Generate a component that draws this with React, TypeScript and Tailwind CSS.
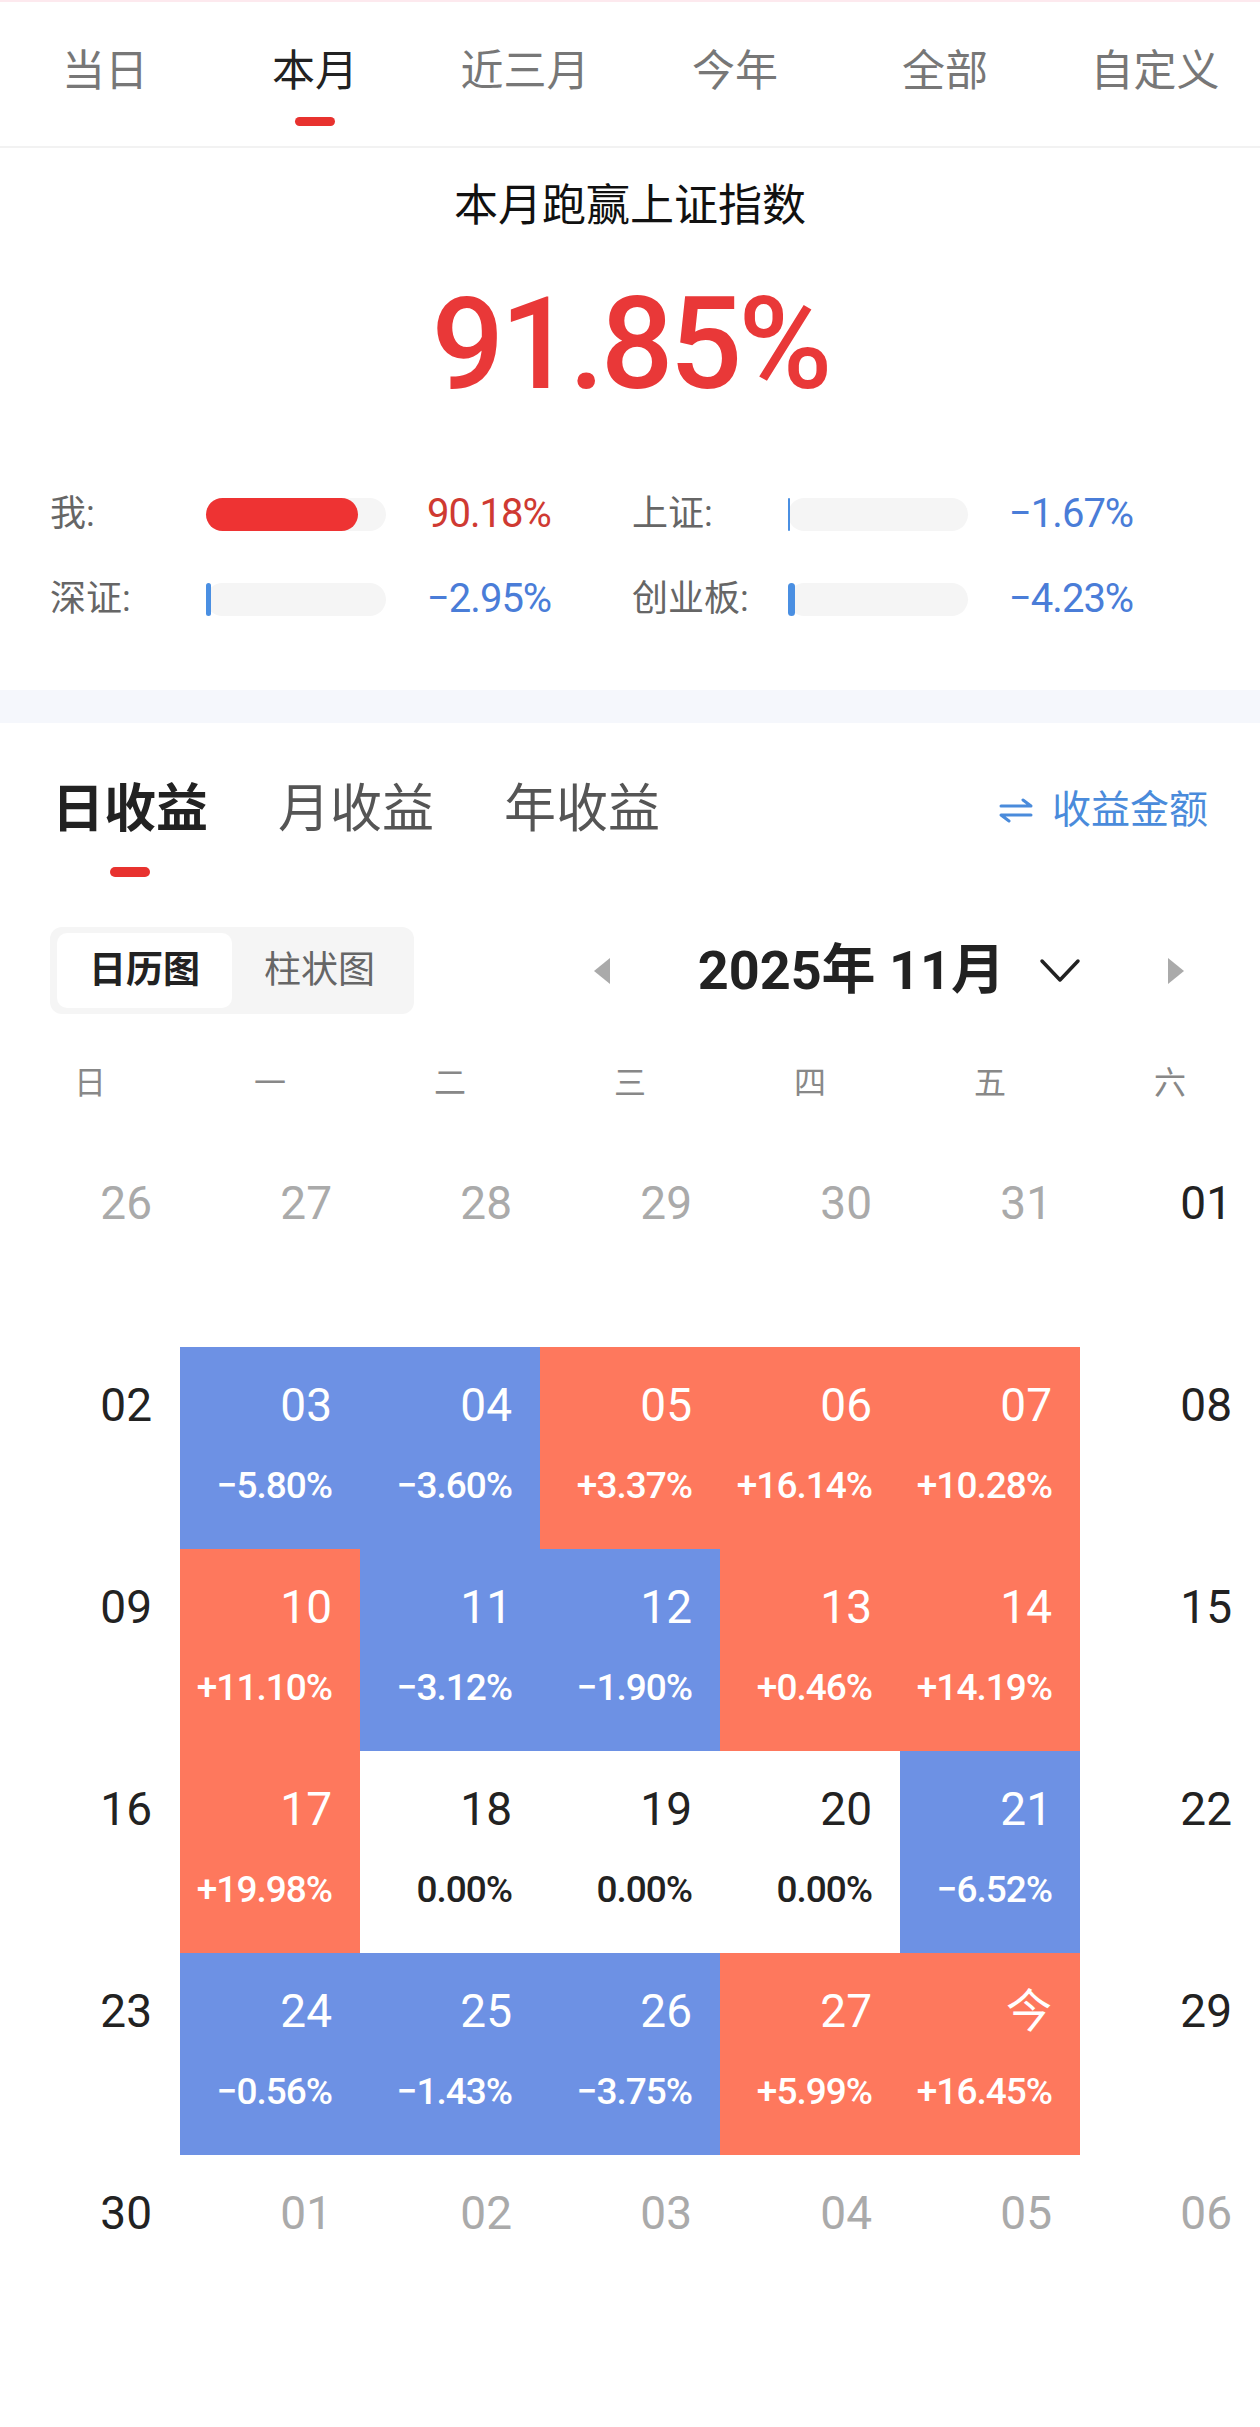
import React from "react";

type Cell = {
  d: string;
  pct?: string;
  kind: "muted" | "plain" | "up" | "down" | "flat";
};

const weeks: Cell[][] = [
  [
    { d: "26", kind: "muted" },
    { d: "27", kind: "muted" },
    { d: "28", kind: "muted" },
    { d: "29", kind: "muted" },
    { d: "30", kind: "muted" },
    { d: "31", kind: "muted" },
    { d: "01", kind: "plain" },
  ],
  [
    { d: "02", kind: "plain" },
    { d: "03", pct: "−5.80%", kind: "down" },
    { d: "04", pct: "−3.60%", kind: "down" },
    { d: "05", pct: "+3.37%", kind: "up" },
    { d: "06", pct: "+16.14%", kind: "up" },
    { d: "07", pct: "+10.28%", kind: "up" },
    { d: "08", kind: "plain" },
  ],
  [
    { d: "09", kind: "plain" },
    { d: "10", pct: "+11.10%", kind: "up" },
    { d: "11", pct: "−3.12%", kind: "down" },
    { d: "12", pct: "−1.90%", kind: "down" },
    { d: "13", pct: "+0.46%", kind: "up" },
    { d: "14", pct: "+14.19%", kind: "up" },
    { d: "15", kind: "plain" },
  ],
  [
    { d: "16", kind: "plain" },
    { d: "17", pct: "+19.98%", kind: "up" },
    { d: "18", pct: "0.00%", kind: "flat" },
    { d: "19", pct: "0.00%", kind: "flat" },
    { d: "20", pct: "0.00%", kind: "flat" },
    { d: "21", pct: "−6.52%", kind: "down" },
    { d: "22", kind: "plain" },
  ],
  [
    { d: "23", kind: "plain" },
    { d: "24", pct: "−0.56%", kind: "down" },
    { d: "25", pct: "−1.43%", kind: "down" },
    { d: "26", pct: "−3.75%", kind: "down" },
    { d: "27", pct: "+5.99%", kind: "up" },
    { d: "今", pct: "+16.45%", kind: "up" },
    { d: "29", kind: "plain" },
  ],
  [
    { d: "30", kind: "plain" },
    { d: "01", kind: "muted" },
    { d: "02", kind: "muted" },
    { d: "03", kind: "muted" },
    { d: "04", kind: "muted" },
    { d: "05", kind: "muted" },
    { d: "06", kind: "muted" },
  ],
];

const cellStyle = {
  muted: "bg-white text-[#aaaaaa]",
  plain: "bg-white text-[#222222]",
  flat: "bg-white text-[#222222]",
  up: "bg-[#fe785d] text-white",
  down: "bg-[#6d91e4] text-white",
};

const topTabs = ["当日", "本月", "近三月", "今年", "全部", "自定义"];

const compare = [
  { label: "我:", fill: "w-[152px] bg-[#ee3333]", value: "90.18%", color: "text-[#cf3a32]" },
  { label: "上证:", fill: "w-[2px] bg-[#4a8fe2]", value: "−1.67%", color: "text-[#4a7dd8]" },
  { label: "深证:", fill: "w-[5px] bg-[#4a8fe2]", value: "−2.95%", color: "text-[#4a7dd8]" },
  { label: "创业板:", fill: "w-[7px] bg-[#4a8fe2]", value: "−4.23%", color: "text-[#4a7dd8]" },
];

const Triangle = ({ dir }: { dir: "left" | "right" }) => (
  <svg width="20" height="28" viewBox="0 0 20 28">
    {dir === "left" ? (
      <polygon points="18,1 18,27 2,14" fill="#aaaaaa" />
    ) : (
      <polygon points="2,1 2,27 18,14" fill="#aaaaaa" />
    )}
  </svg>
);

export default function App() {
  return (
    <div className="min-h-[2427px] bg-white font-[Roboto,'Noto_Sans_CJK_SC',sans-serif] border-t-2 border-[#fde9ee]">
      {/* period tabs */}
      <div className="grid grid-cols-6 h-[146px] border-b-2 border-[#f2f2f2]">
        {topTabs.map((t, i) => (
          <div key={t} className="flex flex-col items-center pt-[43px]">
            <span
              className={`text-[43px] leading-[52px] ${i === 1 ? "text-[#222222]" : "text-[#777777]"}`}
            >
              {t}
            </span>
            {i === 1 && <div className="mt-[20px] w-[40px] h-[9px] rounded-full bg-[#e8322f]" />}
          </div>
        ))}
      </div>

      {/* summary */}
      <div className="flex flex-col items-center pt-[30px]">
        <div className="text-[44px] leading-[56px] text-[#111111]">本月跑赢上证指数</div>
        <div className="mt-[46px] text-[128px] leading-none font-medium tracking-[-4px] text-[#e93838]">
          91.85%
        </div>
      </div>

      <div className="mt-[80px] px-[50px] grid grid-cols-[582px_582px] gap-y-[33px]">
        {compare.map((c) => (
          <div key={c.label} className="flex items-center h-[52px]">
            <span className="w-[156px] text-[36px] text-[#666666]">{c.label}</span>
            <div className="w-[180px] h-[33px] rounded-full bg-[#f5f5f5] flex">
              <div className={`h-full rounded-full ${c.fill}`} />
            </div>
            <span className={`ml-[41px] text-[40px] tracking-[-1px] ${c.color}`}>{c.value}</span>
          </div>
        ))}
      </div>

      <div className="mt-[65px] h-[33px] bg-[#f5f7fc]" />

      {/* earnings tabs */}
      <div className="pt-[55px] px-[52px] flex items-start justify-between">
        <div className="flex gap-[70px]">
          <div className="flex flex-col items-center">
            <span className="text-[52px] leading-[64px] font-bold text-[#222222]">日收益</span>
            <div className="mt-[25px] w-[40px] h-[10px] rounded-full bg-[#e8322f]" />
          </div>
          <span className="text-[52px] leading-[64px] text-[#555555]">月收益</span>
          <span className="text-[52px] leading-[64px] text-[#555555]">年收益</span>
        </div>
        <div className="flex items-center h-[64px] gap-[18px] text-[#4a8bdb]">
          <svg width="36" height="26" viewBox="0 0 36 26" fill="none" stroke="#4a8bdb" strokeWidth="3" strokeLinecap="round" strokeLinejoin="round">
            <path d="M3 9 H33 L25 3" />
            <path d="M33 18 H3 L11 24" />
          </svg>
          <span className="text-[39px]">收益金额</span>
        </div>
      </div>

      {/* view switch + month nav */}
      <div className="mt-[50px] pl-[50px] pr-[74px] flex items-center justify-between">
        <div className="flex px-[7px] py-[6px] rounded-[12px] bg-[#f5f5f5]">
          <div className="w-[175px] h-[75px] rounded-[10px] bg-white flex items-center justify-center text-[37px] font-bold text-[#222222]">
            日历图
          </div>
          <div className="w-[175px] h-[75px] flex items-center justify-center text-[37px] text-[#666666]">
            柱状图
          </div>
        </div>
        <div className="flex items-center">
          <Triangle dir="left" />
          <span className="ml-[86px] text-[54px] font-bold text-[#222222] leading-none">2025年 11月</span>
          <svg className="ml-[34px]" width="42" height="26" viewBox="0 0 42 26" fill="none" stroke="#222222" strokeWidth="3.5" strokeLinecap="round" strokeLinejoin="round">
            <path d="M3 3 L21 22 L39 3" />
          </svg>
          <div className="ml-[85px]">
            <Triangle dir="right" />
          </div>
        </div>
      </div>

      {/* weekdays */}
      <div className="mt-[49px] grid grid-cols-7">
        {["日", "一", "二", "三", "四", "五", "六"].map((w) => (
          <div key={w} className="text-center text-[32px] leading-[40px] text-[#888888]">
            {w}
          </div>
        ))}
      </div>

      {/* calendar */}
      <div className="mt-[42px] grid grid-cols-7">
        {weeks.flat().map((c, i) => (
          <div key={i} className={`h-[202px] flex flex-col items-end pr-[28px] pt-[35px] ${cellStyle[c.kind]}`}>
            <span className="text-[46px] leading-none">{c.d}</span>
            {c.pct && (
              <span className="mt-[39px] text-[37px] leading-none font-medium tracking-[-1px]">{c.pct}</span>
            )}
          </div>
        ))}
      </div>
    </div>
  );
}
